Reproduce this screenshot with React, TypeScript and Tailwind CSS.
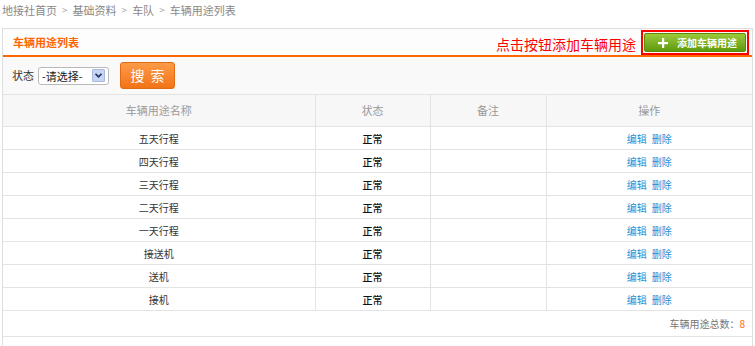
import React from "react";

const rows = ["五天行程", "四天行程", "三天行程", "二天行程", "一天行程", "接送机", "送机", "接机"];

export default function App() {
  return (
    <div
      className="w-[755px] h-[346px] overflow-hidden bg-white text-[#333]"
      style={{ fontFamily: '"Noto Sans CJK SC", "Noto Sans", sans-serif' }}
    >
      <div className="h-[28px] pl-[2px] text-[11px] leading-[20px] text-[#888] flex gap-[5px]">
        <span>地接社首页</span>
        <span className="text-[#aaa] text-[10px]">&gt;</span>
        <span>基础资料</span>
        <span className="text-[#aaa] text-[10px]">&gt;</span>
        <span>车队</span>
        <span className="text-[#aaa] text-[10px]">&gt;</span>
        <span>车辆用途列表</span>
      </div>
      <div className="ml-[2px] w-[751px] border border-[#dedede] h-[330px]">
        <div className="h-[28px] border-b-2 border-[#f60] flex items-start justify-between bg-[#fdfdfd]">
          <div className="pl-[10px] pt-[5px] text-[11px] leading-[16px] font-bold text-[#f60]">车辆用途列表</div>
          <div className="flex items-start">
            <div className="text-[14px] leading-[18px] text-[#f00] pt-[6px] mr-[5px]">点击按钮添加车辆用途</div>
            <div className="mt-px mr-[3px] border-2 border-[#f00] p-px">
              <div className="w-[102px] h-[19px] rounded-[2px] border border-[#5a8a08] bg-gradient-to-b from-[#9cc93a] to-[#5f9a0c] flex items-center pl-[13px] gap-[9px]">
                <svg width="10" height="10" viewBox="0 0 10 10">
                  <rect x="4" y="0" width="2.2" height="10" fill="#fff" />
                  <rect x="0" y="4" width="10" height="2.2" fill="#fff" />
                </svg>
                <span className="text-[10px] leading-[12px] font-bold text-white">添加车辆用途</span>
              </div>
            </div>
          </div>
        </div>
        <div className="h-[37px] bg-[#f9f9f9] flex items-center pl-[9px]">
          <span className="text-[11px] text-[#333]">状态</span>
          <div className="ml-[4px] w-[71px] h-[18px] border border-[#b9b9b9] rounded-[3px] bg-white flex items-center justify-between pl-[3px] pr-[3px]">
            <span className="text-[11px] leading-[14px] text-[#222]">-请选择-</span>
            <div className="w-[13px] h-[13px] bg-[#c6d6f2] border border-[#aab9dd] rounded-[1px] flex items-center justify-center">
              <svg width="7" height="5" viewBox="0 0 7 5">
                <path d="M0.5 0.8 L3.5 3.8 L6.5 0.8" stroke="#203060" strokeWidth="1.6" fill="none" />
              </svg>
            </div>
          </div>
          <div className="ml-[11px] w-[55px] h-[27px] rounded-[3px] border border-[#e26a12] bg-gradient-to-b from-[#fb9b45] to-[#f27314] flex items-center justify-center">
            <span className="text-[14px] text-white tracking-[6px] pl-[6px]">搜索</span>
          </div>
        </div>
        <table className="w-full border-collapse text-[10px]" style={{ tableLayout: "fixed" }}>
          <colgroup>
            <col style={{ width: 312 }} />
            <col style={{ width: 115 }} />
            <col style={{ width: 116 }} />
            <col />
          </colgroup>
          <thead>
            <tr className="h-[32px] bg-[#f7f7f7] text-[11px] text-[#999] font-normal">
              <th className="border border-l-0 border-[#e3e3e3] font-normal">车辆用途名称</th>
              <th className="border border-[#e3e3e3] font-normal">状态</th>
              <th className="border border-[#e3e3e3] font-normal">备注</th>
              <th className="border border-r-0 border-[#e3e3e3] font-normal">操作</th>
            </tr>
          </thead>
          <tbody>
            {rows.map((r) => (
              <tr key={r} className="h-[23px]">
                <td className="border border-l-0 border-[#e3e3e3] text-center text-[#333]">{r}</td>
                <td className="border border-[#e3e3e3] text-center text-[#111] font-medium">正常</td>
                <td className="border border-[#e3e3e3]"></td>
                <td className="border border-r-0 border-[#e3e3e3] text-center text-[#1e8fd6]">
                  编辑<span className="ml-[5px]">删除</span>
                </td>
              </tr>
            ))}
            <tr className="h-[26px]">
              <td colSpan={4} className="border-y border-[#e3e3e3] text-right pr-[7px] text-[#777]">
                车辆用途总数：<span className="text-[#f60]">8</span>
              </td>
            </tr>
          </tbody>
        </table>
      </div>
    </div>
  );
}
